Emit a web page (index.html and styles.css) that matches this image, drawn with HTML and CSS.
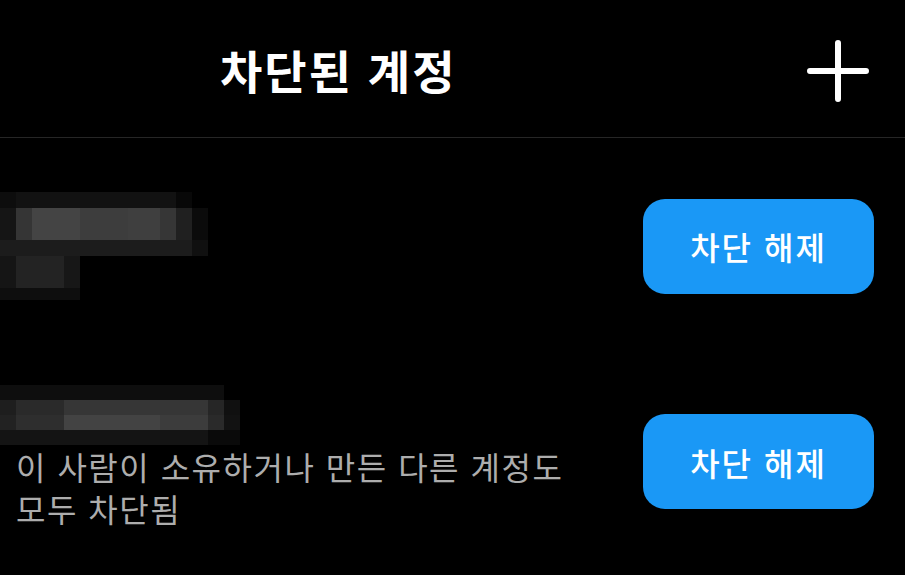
FILE: index.html
```html
<!DOCTYPE html>
<html lang="ko">
<head>
<meta charset="utf-8">
<title>차단된 계정</title>
<link rel="stylesheet" href="styles.css">
</head>
<body>
<header class="header">
  <h1 class="title">차단된 계정</h1>
  <button class="add" aria-label="추가">
    <svg width="62" height="62" viewBox="0 0 62 62"><path d="M31 3V59M3 31H59" stroke="#fff" stroke-width="6" stroke-linecap="round" fill="none"/></svg>
  </button>
</header>
<main>
  <div class="row row-one">
    <div class="blur blur-a">
      <div class="ba ba1"></div>
      <div class="ba ba2"></div>
      <div class="ba ba2"></div>
      <div class="ba ba4"></div>
      <div class="ba ba5"></div>
      <div class="ba ba5"></div>
      <div class="ba ba7"></div>
    </div>
    <button class="unblock">차단 해제</button>
  </div>
  <div class="row row-two">
    <div class="info">
      <div class="blur blur-b">
        <div class="bb bb1"></div>
        <div class="bb bb2"></div>
        <div class="bb bb3"></div>
        <div class="bb bb4"></div>
      </div>
      <p class="note">이 사람이 소유하거나 만든 다른 계정도<br>모두 차단됨</p>
    </div>
    <button class="unblock unblock-two">차단 해제</button>
  </div>
</main>
</body>
</html>
```
FILE: styles.css
```css
html, body {
  margin: 0;
  padding: 0;
  background: #000;
}
body {
  width: 905px;
  height: 575px;
  overflow: hidden;
  font-family: "Noto Sans CJK KR", "Noto Sans", sans-serif;
  color: #fff;
}
.header {
  height: 138px;
  box-sizing: border-box;
  display: flex;
  align-items: center;
  justify-content: space-between;
  padding: 0 36px 0 220px;
  border-bottom: 1px solid #262626;
}
.title {
  margin: 0;
  font-size: 46px;
  font-weight: 700;
  letter-spacing: 2px;
  line-height: 1;
  color: #fff;
  margin-top: 0;
}
.add {
  background: none;
  border: 0;
  padding: 0;
  width: 62px;
  height: 62px;
  display: flex;
  margin-top: 4px;
}
.row {
  display: flex;
  justify-content: space-between;
  padding-right: 31px;
}
.row-one {
  height: 214px;
  align-items: center;
  margin-top: 1px;
}
.row-two {
  align-items: flex-start;
}
.blur {
  display: flex;
  flex-direction: column;
}
.ba { width: 208px; height: 16px; }
.ba1 { background: linear-gradient(to right, #0d0d0d 0 16px, #121212 16px 176px, #080808 176px 192px, transparent 192px); }
.ba2 { background: linear-gradient(to right, #151515 0 16px, #353535 16px 32px, #444 32px 80px, #3d3d3d 80px 128px, #3f3f3f 128px 160px, #363636 160px 176px, #202020 176px 192px, #0b0b0b 192px 208px); }
.ba4 { background: linear-gradient(to right, #1c1c1c 0 192px, #101010 192px 208px); }
.ba5 { background: linear-gradient(to right, #151515 0 16px, #232323 16px 64px, #171717 64px 80px, transparent 80px); }
.ba7 { height: 12px; background: linear-gradient(to right, #0e0e0e 0 80px, transparent 80px); }
.info {
  margin-top: 32px;
}
.bb { width: 240px; height: 15px; }
.bb1 { background: linear-gradient(to right, #0e0e0e 0 224px, transparent 224px); }
.bb2 { background: linear-gradient(to right, #1e1e1e 0 16px, #2a2a2a 16px 64px, #363636 64px 208px, #262626 208px 224px, #101010 224px 240px); }
.bb3 { background: linear-gradient(to right, #222 0 16px, #2e2e2e 16px 64px, #434343 64px 160px, #3c3c3c 160px 208px, #2a2a2a 208px 224px, #121212 224px 240px); }
.bb4 { background: linear-gradient(to right, #141414 0 208px, #0a0a0a 208px 240px); }
.note {
  margin: 0;
  padding-left: 16px;
  font-size: 32px;
  line-height: 42px;
  color: #adadad;
  letter-spacing: 1.5px;
}
.unblock {
  width: 231px;
  height: 95px;
  border: 0;
  border-radius: 22px;
  background: #1a98f6;
  color: #fff;
  font-family: "Noto Sans CJK KR", "Noto Sans", sans-serif;
  font-size: 32px;
  font-weight: 500;
  letter-spacing: 2px;
  padding: 0;
}
.unblock-two {
  margin-top: 61px;
}
```
